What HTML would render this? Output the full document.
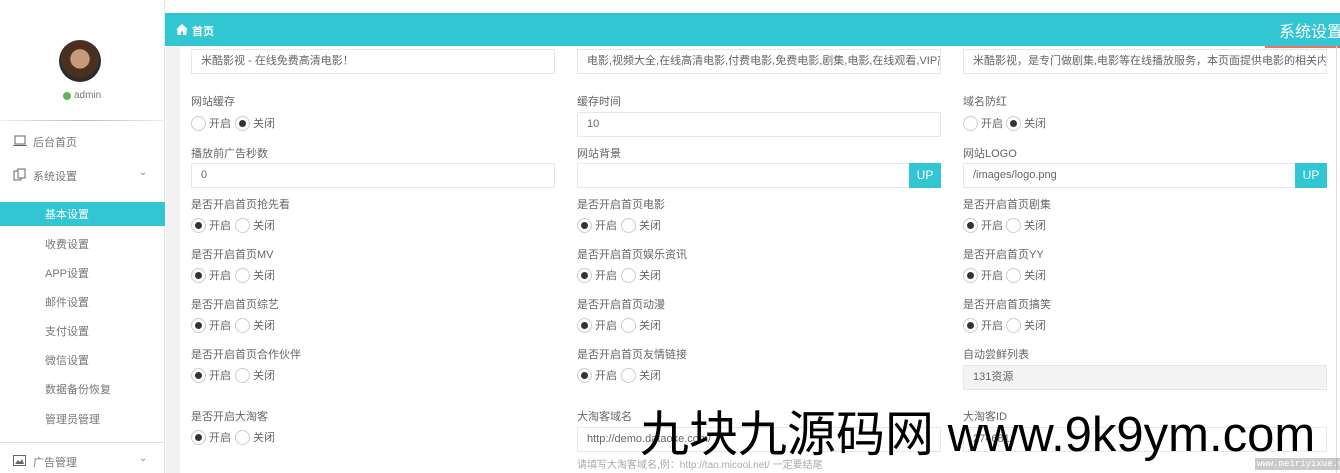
<!DOCTYPE html><html><head><meta charset="utf-8"><style>
*{margin:0;padding:0;box-sizing:border-box}
body{width:1340px;height:473px;overflow:hidden;background:#fff;font-family:"Liberation Sans","Noto Sans CJK SC",sans-serif;font-size:12px;color:#555;position:relative}
.a{position:absolute;white-space:nowrap}
.side{left:0;top:0;width:165px;height:473px;background:#fff;border-right:1px solid #e6e6e6}
.gut{left:166px;top:46px;width:14px;height:427px;background:#f2f2f2}
.hdr{left:165px;top:13px;width:1175px;height:33px;background:#32c5d2;color:#fff}
.lbl{font-size:11px;color:#666;line-height:14px}
.inp{height:25px;border:1px solid #e6e6ee;background:#fff;font-size:11px;color:#666;line-height:23px;padding-left:9px;white-space:nowrap;overflow:hidden}
.r{width:15px;height:15px;border:1px solid #ccc;border-radius:50%;background:#fff}
.r.on::after{content:"";position:absolute;left:3px;top:3px;width:7px;height:7px;border-radius:50%;background:#333}
.rt{font-size:11px;color:#666;line-height:14px}
.up{width:32px;height:25px;background:#32c5d2;color:#fff;font-size:12px;line-height:25px;text-align:center}
.mi{left:45px;font-size:11px;color:#777}
</style></head><body>
<div class="a side"></div>
<div class="a" style="left:59px;top:40px;width:42px;height:42px;border-radius:50%;background:radial-gradient(circle at 50% 45%,#c99a7a 0 30%,#4a3020 32% 60%,#2b2b2b 62%)"></div>
<div class="a" style="left:63px;top:92px;width:8px;height:8px;border-radius:50%;background:#5cb85c"></div>
<div class="a" style="left:74px;top:90px;font-size:10px;color:#777">admin</div>
<div class="a" style="left:0;top:120px;width:165px;height:1px;background:linear-gradient(90deg,#eee,#bbb,#eee)"></div>
<svg class="a" style="left:13px;top:135px" width="14" height="12"><rect x="2" y="1" width="10" height="8" fill="none" stroke="#666"/><line x1="0" y1="10.5" x2="14" y2="10.5" stroke="#666"/></svg>
<div class="a" style="left:33px;top:134px;font-size:11px;color:#777">后台首页</div>
<svg class="a" style="left:13px;top:168px" width="13" height="14"><rect x="1" y="3" width="7" height="9" fill="none" stroke="#666"/><rect x="5" y="1" width="7" height="9" fill="#fff" stroke="#666"/></svg>
<div class="a" style="left:33px;top:168px;font-size:11px;color:#777">系统设置</div>
<div class="a" style="left:139px;top:167px;font-size:10px;color:#888">⌄</div>
<div class="a" style="left:0;top:202px;width:165px;height:24px;background:#32c5d2"></div>
<div class="a mi" style="top:206px;color:#fff">基本设置</div>
<div class="a mi" style="top:236px">收费设置</div>
<div class="a mi" style="top:265px">APP设置</div>
<div class="a mi" style="top:294px">邮件设置</div>
<div class="a mi" style="top:323px">支付设置</div>
<div class="a mi" style="top:352px">微信设置</div>
<div class="a mi" style="top:381px">数据备份恢复</div>
<div class="a mi" style="top:411px">管理员管理</div>
<div class="a" style="left:0;top:442px;width:165px;height:1px;background:#ddd"></div>
<svg class="a" style="left:13px;top:455px" width="13" height="11"><rect x=".5" y=".5" width="12" height="10" fill="none" stroke="#666"/><path d="M2 9l3-4 2 2 2-3 2 5z" fill="#666"/></svg>
<div class="a" style="left:33px;top:454px;font-size:11px;color:#777">广告管理</div>
<div class="a" style="left:139px;top:453px;font-size:10px;color:#888">⌄</div>

<div class="a gut"></div>
<div class="a hdr"><svg class="a" style="left:11px;top:11px" width="12" height="11"><path d="M6 0L0 5.5h1.5V11h3.5V7.5h2V11h3.5V5.5H12z" fill="#fff"/></svg><span class="a" style="left:27px;top:10px;font-size:11px;font-weight:bold">首页</span><span class="a" style="left:1114px;top:5px;font-size:16px">系统设置</span></div>
<div class="a" style="left:1265px;top:46px;width:75px;height:2px;background:#f07060"></div>
<div class="a" style="left:1336px;top:46px;width:1px;height:427px;background:#ddd"></div>

<div class="a inp" style="left:191px;top:49px;width:364px">米酷影视 - 在线免费高清电影！</div>
<div class="a inp" style="left:577px;top:49px;width:364px">电影,视频大全,在线高清电影,付费电影,免费电影,剧集,电影,在线观看,VIP高清电影</div>
<div class="a inp" style="left:963px;top:49px;width:364px">米酷影视，是专门做剧集,电影等在线播放服务，本页面提供电影的相关内容。</div>

<div class="a lbl" style="left:191px;top:95px">网站缓存</div>
<div class="a r" style="left:191px;top:116px"></div><div class="a rt" style="left:209px;top:117px">开启</div><div class="a r on" style="left:235px;top:116px"></div><div class="a rt" style="left:253px;top:117px">关闭</div>
<div class="a lbl" style="left:577px;top:95px">缓存时间</div>
<div class="a inp" style="left:577px;top:112px;width:364px">10</div>
<div class="a lbl" style="left:963px;top:95px">域名防红</div>
<div class="a r" style="left:963px;top:116px"></div><div class="a rt" style="left:981px;top:117px">开启</div><div class="a r on" style="left:1006px;top:116px"></div><div class="a rt" style="left:1024px;top:117px">关闭</div>

<div class="a lbl" style="left:191px;top:147px">播放前广告秒数</div>
<div class="a inp" style="left:191px;top:163px;width:364px">0</div>
<div class="a lbl" style="left:577px;top:147px">网站背景</div>
<div class="a inp" style="left:577px;top:163px;width:333px"></div><div class="a up" style="left:909px;top:163px">UP</div>
<div class="a lbl" style="left:963px;top:147px">网站LOGO</div>
<div class="a inp" style="left:963px;top:163px;width:333px">/images/logo.png</div><div class="a up" style="left:1295px;top:163px">UP</div>

<div class="a lbl" style="left:191px;top:198px">是否开启首页抢先看</div>
<div class="a r on" style="left:191px;top:218px"></div><div class="a rt" style="left:209px;top:219px">开启</div><div class="a r" style="left:235px;top:218px"></div><div class="a rt" style="left:253px;top:219px">关闭</div>
<div class="a lbl" style="left:577px;top:198px">是否开启首页电影</div>
<div class="a r on" style="left:577px;top:218px"></div><div class="a rt" style="left:595px;top:219px">开启</div><div class="a r" style="left:621px;top:218px"></div><div class="a rt" style="left:639px;top:219px">关闭</div>
<div class="a lbl" style="left:963px;top:198px">是否开启首页剧集</div>
<div class="a r on" style="left:963px;top:218px"></div><div class="a rt" style="left:981px;top:219px">开启</div><div class="a r" style="left:1006px;top:218px"></div><div class="a rt" style="left:1024px;top:219px">关闭</div>

<div class="a lbl" style="left:191px;top:248px">是否开启首页MV</div>
<div class="a r on" style="left:191px;top:268px"></div><div class="a rt" style="left:209px;top:269px">开启</div><div class="a r" style="left:235px;top:268px"></div><div class="a rt" style="left:253px;top:269px">关闭</div>
<div class="a lbl" style="left:577px;top:248px">是否开启首页娱乐资讯</div>
<div class="a r on" style="left:577px;top:268px"></div><div class="a rt" style="left:595px;top:269px">开启</div><div class="a r" style="left:621px;top:268px"></div><div class="a rt" style="left:639px;top:269px">关闭</div>
<div class="a lbl" style="left:963px;top:248px">是否开启首页YY</div>
<div class="a r on" style="left:963px;top:268px"></div><div class="a rt" style="left:981px;top:269px">开启</div><div class="a r" style="left:1006px;top:268px"></div><div class="a rt" style="left:1024px;top:269px">关闭</div>

<div class="a lbl" style="left:191px;top:298px">是否开启首页综艺</div>
<div class="a r on" style="left:191px;top:318px"></div><div class="a rt" style="left:209px;top:319px">开启</div><div class="a r" style="left:235px;top:318px"></div><div class="a rt" style="left:253px;top:319px">关闭</div>
<div class="a lbl" style="left:577px;top:298px">是否开启首页动漫</div>
<div class="a r on" style="left:577px;top:318px"></div><div class="a rt" style="left:595px;top:319px">开启</div><div class="a r" style="left:621px;top:318px"></div><div class="a rt" style="left:639px;top:319px">关闭</div>
<div class="a lbl" style="left:963px;top:298px">是否开启首页搞笑</div>
<div class="a r on" style="left:963px;top:318px"></div><div class="a rt" style="left:981px;top:319px">开启</div><div class="a r" style="left:1006px;top:318px"></div><div class="a rt" style="left:1024px;top:319px">关闭</div>

<div class="a lbl" style="left:191px;top:348px">是否开启首页合作伙伴</div>
<div class="a r on" style="left:191px;top:368px"></div><div class="a rt" style="left:209px;top:369px">开启</div><div class="a r" style="left:235px;top:368px"></div><div class="a rt" style="left:253px;top:369px">关闭</div>
<div class="a lbl" style="left:577px;top:348px">是否开启首页友情链接</div>
<div class="a r on" style="left:577px;top:368px"></div><div class="a rt" style="left:595px;top:369px">开启</div><div class="a r" style="left:621px;top:368px"></div><div class="a rt" style="left:639px;top:369px">关闭</div>
<div class="a lbl" style="left:963px;top:348px">自动尝鲜列表</div>
<div class="a inp" style="left:963px;top:365px;width:364px;height:25px;background:#f3f3f3">131资源</div>

<div class="a lbl" style="left:191px;top:410px">是否开启大淘客</div>
<div class="a r on" style="left:191px;top:430px"></div><div class="a rt" style="left:209px;top:431px">开启</div><div class="a r" style="left:235px;top:430px"></div><div class="a rt" style="left:253px;top:431px">关闭</div>
<div class="a lbl" style="left:577px;top:410px">大淘客域名</div>
<div class="a inp" style="left:577px;top:427px;width:364px">http://demo.dataoke.com/</div>
<div class="a" style="left:577px;top:456px;font-size:10px;color:#aaa">请填写大淘客域名,例：http://tao.micool.net/ 一定要结尾</div>
<div class="a lbl" style="left:963px;top:410px">大淘客ID</div>
<div class="a inp" style="left:963px;top:427px;width:364px">274681</div>

<div class="a" style="left:640px;top:406px;font-size:49px;color:#000;line-height:58px">九块九源码网 www.9k9ym.com</div>
<div class="a" style="left:1255px;top:458px;font-size:9px;font-family:'Liberation Mono',monospace;background:rgba(150,150,150,.5);color:#fff;padding:0 2px;line-height:12px">www.meiriyixue.cn</div>
</body></html>
